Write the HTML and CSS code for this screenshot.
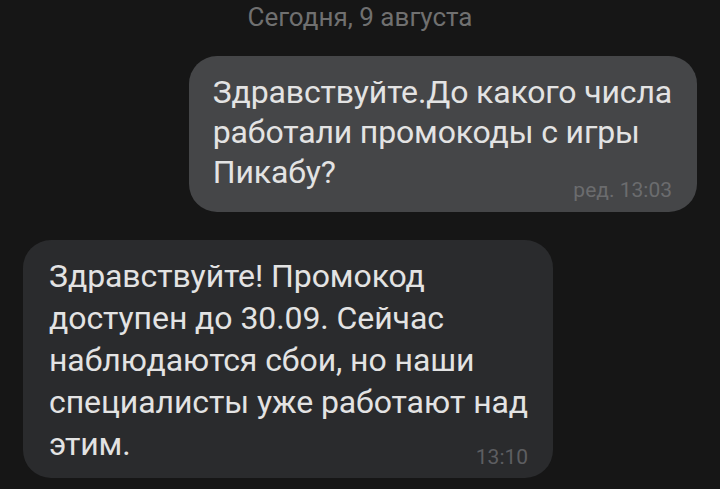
FILE: index.html
```html
<!DOCTYPE html>
<html lang="ru">
<head>
<meta charset="utf-8">
<link rel="stylesheet" href="styles.css">
</head>
<body>
<div class="chat">
  <div class="date">Сегодня, 9 августа</div>
  <div class="bubble out">
    <div class="text">Здравствуйте.До какого числа<br>работали промокоды с игры<br>Пикабу?</div>
    <div class="meta">ред. 13:03</div>
  </div>
  <div class="bubble in">
    <div class="text">Здравствуйте! Промокод<br>доступен до 30.09. Сейчас<br>наблюдаются сбои, но наши<br>специалисты уже работают над<br>этим.</div>
    <div class="meta">13:10</div>
  </div>
</div>
</body>
</html>
```
FILE: styles.css
```css
html, body {
  margin: 0;
  padding: 0;
  background: #161616;
  height: 100%;
}
.chat {
  display: flex;
  flex-direction: column;
  padding: 0 23px;
  font-family: Roboto, "Noto Sans", sans-serif;
}
.date {
  align-self: center;
  color: #707070;
  font-size: 26px;
  line-height: 26px;
  margin-top: 4px;
  height: 26px;
}
.bubble {
  display: flex;
  flex-direction: column;
  border-radius: 28px;
  width: fit-content;
}
.bubble .text {
  color: #e3e3e3;
  font-size: 32px;
  white-space: nowrap;
}
.bubble .meta {
  align-self: flex-end;
  font-size: 21px;
  line-height: 21px;
}
.out {
  align-self: flex-end;
  background: #454648;
  margin-top: 26px;
  padding: 16px 25px 11px 24px;
}
.out .text {
  line-height: 40px;
  letter-spacing: -0.15px;
}
.out .meta {
  color: #6b6c6e;
  margin-top: -12px;
}
.in {
  align-self: flex-start;
  background: #2a2b2d;
  margin-top: 28px;
  padding: 15px 25px 10px 26px;
}
.in .text {
  line-height: 42px;
  letter-spacing: -0.08px;
}
.in .meta {
  color: #5d5e61;
  margin-top: -18px;
}
```
